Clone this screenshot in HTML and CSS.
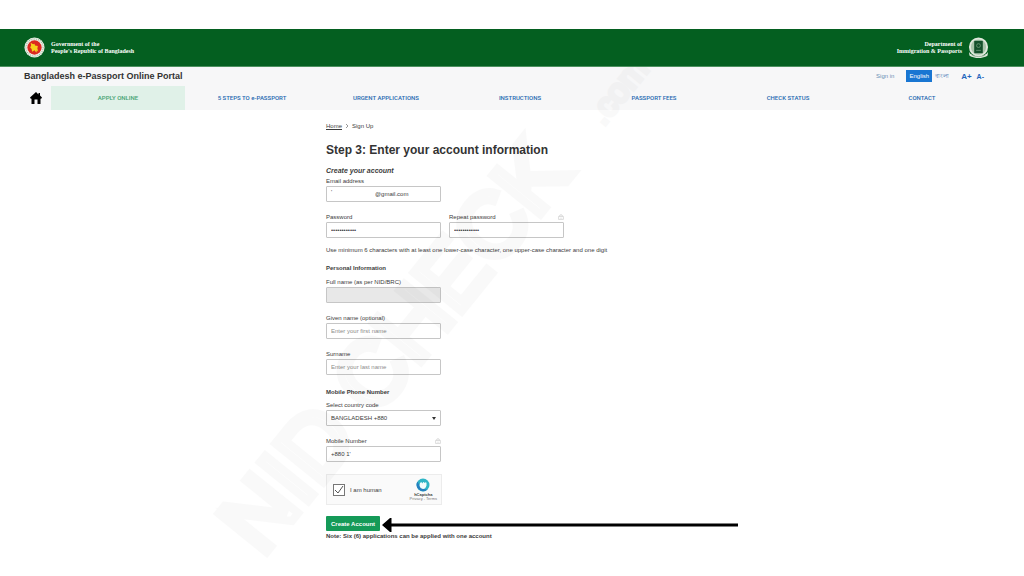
FILE: index.html
```
<!DOCTYPE html>
<html lang="en">
<head>
    <meta charset="UTF-8">
    <meta name="viewport" content="width=device-width, initial-scale=1.0">
    <title>Bangladesh e-Passport Online Portal</title>
    <link rel="stylesheet" href="styles.css">
</head>
<body>
    <header class="gov-bar">
        <div class="gov-brand">
            <svg class="seal" viewBox="0 0 44 44" aria-hidden="true">
                <circle cx="22" cy="22" r="21" fill="#f4f6ee"/>
                <circle cx="22" cy="22" r="18" fill="none" stroke="#9dbb9f" stroke-width="3" stroke-dasharray="2 2"/>
                <circle cx="22" cy="22" r="15" fill="#dc2a20"/>
                <path d="M14 12l5 3 3-1 1 4 6 1-1 5 2 7-3-3-1 5-4-5-5 3-1-6-3-3 2-4z" fill="#f6d21c"/>
            </svg>
            <span>Government of the<br>People's Republic of Bangladesh</span>
        </div>
        <div class="gov-brand right">
            <span>Department of<br>Immigration &amp; Passports</span>
            <svg class="seal" viewBox="0 0 44 44" aria-hidden="true">
                <circle cx="22" cy="21" r="18" fill="#a9c5ab" stroke="#dfe8dc" stroke-width="4"/>
                <rect x="13" y="8" width="18" height="26" fill="#14502b"/>
                <circle cx="22" cy="18" r="4" fill="none" stroke="#5f8f6b" stroke-width="2"/>
                <path d="M17 28h10" stroke="#5f8f6b" stroke-width="2"/>
                <path d="M2 31c5 12 35 12 40 0l-1 8c-9 7-29 7-38 0z" fill="#dfe8dc"/>
                <path d="M8 38c8 4 20 4 28 0" fill="none" stroke="#55805c" stroke-width="1"/>
            </svg>
        </div>
    </header>

    <div class="portal-head">
        <div class="portal-top">
            <strong class="portal-title">Bangladesh e-Passport Online Portal</strong>
            <div class="tools">
                <a class="sign-in" href="#">Sign in</a>
                <div class="langs">
                    <button type="button" class="lang active">English</button>
                    <button type="button" class="lang" lang="bn">বাংলা</button>
                </div>
                <div class="sizes">
                    <button type="button" class="size-up">A+</button>
                    <button type="button" class="size-down">A-</button>
                </div>
            </div>
        </div>
        <nav class="main-nav">
            <a class="home" href="#" aria-label="Home">
                <svg viewBox="0 0 24 24"><path d="M12 0L0 11l2 3 1-1v11h6v-9h6v9h6V13l1 1 2-3-4-4V2h-3v3z"/></svg>
            </a>
            <div class="nav-items">
                <a class="active" href="#">APPLY ONLINE</a>
                <a href="#">5 STEPS TO e-PASSPORT</a>
                <a href="#">URGENT APPLICATIONS</a>
                <a href="#">INSTRUCTIONS</a>
                <a href="#">PASSPORT FEES</a>
                <a href="#">CHECK STATUS</a>
                <a href="#">CONTACT</a>
            </div>
        </nav>
    </div>

    <main class="content">
        <div class="breadcrumb">
            <a href="#">Home</a>
            <svg viewBox="0 0 4 6" aria-hidden="true"><path d="M1 1l2 2-2 2"/></svg>
            <span>Sign Up</span>
        </div>
        <h1>Step 3: Enter your account information</h1>

        <form>
            <h2 class="create">Create your account</h2>
            <div class="grid">
                <div class="field">
                    <label for="email">Email address</label>
                    <div class="email-box">
                        <span>'</span>
                        <input id="email" type="text" value="@gmail.com">
                    </div>
                </div>
            </div>
            <div class="grid">
                <div class="field">
                    <label for="password">Password</label>
                    <input id="password" type="password" value="abcdefghijkl">
                </div>
                <div class="field">
                    <div class="label-row">
                        <label for="repeat">Repeat password</label>
                        <svg viewBox="0 0 10 10" aria-hidden="true"><path d="M3 4V2q2-2 4 0v2M1 4h8v5H1zM5 6v2"/></svg>
                    </div>
                    <input id="repeat" type="password" value="abcdefghijkl">
                </div>
            </div>
            <p class="hint">Use minimum 6 characters with at least one lower-case character, one upper-case character and one digit</p>

            <h2 class="section">Personal Information</h2>
            <div class="grid">
                <div class="field">
                    <label for="fullname">Full name (as per NID/BRC)</label>
                    <input id="fullname" type="text" disabled>
                </div>
            </div>
            <div class="grid">
                <div class="field">
                    <label for="given">Given name (optional)</label>
                    <input id="given" type="text" placeholder="Enter your first name">
                </div>
            </div>
            <div class="grid">
                <div class="field">
                    <label for="surname">Surname</label>
                    <input id="surname" type="text" placeholder="Enter your last name">
                </div>
            </div>

            <h2 class="section phone">Mobile Phone Number</h2>
            <div class="grid">
                <div class="field">
                    <label for="country">Select country code</label>
                    <select id="country">
                        <option>BANGLADESH +880</option>
                    </select>
                </div>
            </div>
            <div class="grid">
                <div class="field">
                    <div class="label-row">
                        <label for="mobile">Mobile Number</label>
                        <svg viewBox="0 0 10 10" aria-hidden="true"><path d="M3 4V2q2-2 4 0v2M1 4h8v5H1zM5 6v2"/></svg>
                    </div>
                    <input id="mobile" type="text" value="+880 1'">
                </div>
            </div>

            <div class="captcha">
                <input id="human" type="checkbox" checked>
                <label for="human">I am human</label>
                <div class="captcha-brand">
                    <svg viewBox="0 0 28 28" aria-hidden="true">
                        <circle cx="14" cy="14" r="13" fill="#2fb5c6"/>
                        <path d="M3 7A13 13 0 0 0 23 23Q10 24 3 7z" fill="#267fc0"/>
                        <path d="M8 10q3-3 5 1 2-5 4-1 3-3 4 0v5q-2 7-7 7-6-1-7-7z" fill="#f2fcfc"/>
                    </svg>
                    <b>hCaptcha</b>
                    <small>Privacy - Terms</small>
                </div>
            </div>

            <div class="submit-row">
                <button type="submit" class="submit">Create Account</button>
                <svg class="pointer" viewBox="0 0 356 14" aria-hidden="true">
                    <path d="M0 7L8 0h1.500v5.500H356v3H9.500V14H8z"/>
                </svg>
            </div>
            <p class="note">Note: Six (6) applications can be applied with one account</p>
        </form>
    </main>

    <svg class="watermark" viewBox="0 0 1024 576" aria-hidden="true">
        <g transform="translate(262 558) rotate(-51)">
            <text x="0" y="0">NID CHECK</text>
            <text class="domain" x="550" y="-6">.com</text>
        </g>
    </svg>
</body>
</html>
```
FILE: styles.css
```
* {
    box-sizing: border-box;
}
body {
    margin: 0;
    padding-top: 29px;
    background: #fff;
    color: #3c3c3c;
    font-family: "Liberation Sans", Arial, sans-serif;
    font-size: 6px;
    line-height: 10px;
}
a {
    color: inherit;
    text-decoration: none;
}
button, input, select {
    font-family: inherit;
    font-size: 6px;
    color: inherit;
}
h1, h2, p {
    margin: 0;
}

/* green bar */
.gov-bar {
    position: relative;
    z-index: 1;
    display: flex;
    justify-content: space-between;
    align-items: center;
    height: 38px;
    padding: 0 35px 0 24px;
    background: #045f20;
    border-bottom: 1px solid #4d9160;
}
.gov-brand {
    display: flex;
    align-items: center;
    gap: 6px;
    color: #fff;
    font: bold 6px/7px "Liberation Serif", "Times New Roman", serif;
}
.gov-brand.right {
    text-align: right;
}
.seal {
    width: 21px;
    height: 21px;
}

/* title and navigation */
.portal-head {
    padding: 1px 35px 0 24px;
    background: #f7f7f8;
}
.portal-top {
    display: flex;
    justify-content: space-between;
    align-items: center;
    height: 16px;
}
.portal-title {
    font-size: 9px;
    color: #333;
}
.tools, .langs, .sizes {
    display: flex;
    align-items: center;
}
.tools {
    gap: 12px;
    padding-right: 5px;
    color: #3f78b5;
}
.tools button {
    border: 0;
    background: none;
    padding: 0;
}
.sign-in {
    color: #6c8fb5;
}
.tools .lang {
    padding: 0 0 0 3px;
    height: 12px;
}
.tools .lang.active {
    padding: 0 3px;
    background: #1976d2;
    color: #fff;
}
.sizes {
    gap: 5px;
    color: #1f66bd;
}
.tools .size-up {
    font-size: 8px;
    font-weight: bold;
}
.tools .size-down {
    font-size: 7px;
    font-weight: bold;
}
.main-nav {
    display: flex;
    align-items: center;
    margin-top: 2px;
    height: 24px;
}
.home {
    display: flex;
    width: 27px;
    padding-left: 6px;
}
.home svg {
    width: 12px;
    height: 12px;
    fill: #000;
}
.nav-items {
    flex: 1;
    display: grid;
    grid-template-columns: repeat(7, 1fr);
}
.nav-items a {
    height: 24px;
    line-height: 23px;
    text-align: center;
    font-family: Roboto, sans-serif;
    font-weight: 500;
    color: #2368b0;
}
.nav-items a.active {
    background: #e0f1e8;
    color: #43a171;
}

/* form */
.content {
    max-width: 372px;
    margin: 0 auto;
    padding-top: 11px;
}
.breadcrumb {
    display: flex;
    align-items: center;
    gap: 3px;
}
.breadcrumb a {
    text-decoration: underline;
}
.breadcrumb svg {
    width: 4px;
    height: 6px;
    fill: none;
    stroke: #999;
}
h1 {
    margin-top: 10px;
    font-size: 12px;
    line-height: 18px;
    color: #333;
}
.create {
    margin-top: 7px;
    font-size: 7px;
    line-height: 10px;
    font-style: italic;
}
.grid {
    display: grid;
    grid-template-columns: 115px 115px;
    column-gap: 8px;
    margin-bottom: 10px;
}
.field label {
    display: block;
}
.label-row {
    display: flex;
    justify-content: space-between;
    align-items: center;
}
.label-row svg {
    width: 6px;
    height: 6px;
    fill: none;
    stroke: #c4c4c4;
}
.field input,
.field select,
.email-box {
    display: block;
    width: 100%;
    height: 16px;
    padding: 0 4px;
    border: 1px solid #c6c6c6;
    border-radius: 1px;
    background: #fff;
}
.field input[type="password"] {
    font-size: 6px;
}
.field input:disabled {
    background: #e8e8e8;
}
.field input::placeholder {
    color: #8c8c8c;
}
.email-box {
    display: flex;
}
.email-box span {
    width: 44px;
}
.email-box input {
    flex: 1;
    min-width: 0;
    height: 14px;
    padding: 0;
    border: 0;
    background: none;
}
.field select {
    appearance: none;
    background: url("data:image/svg+xml,%3Csvg xmlns='http://www.w3.org/2000/svg' viewBox='0 0 4 3'%3E%3Cpath d='M0 0h4L2 3z' fill='%23333'/%3E%3C/svg%3E") no-repeat right 4px center / 4px 3px #fff;
}
.hint {
    margin-top: -3px;
}
.section {
    margin: 8px 0 4px;
    font-size: 6px;
    line-height: 10px;
}
.section.phone {
    margin: 12px 0 3px;
}
.captcha {
    display: flex;
    align-items: center;
    width: 116px;
    height: 31px;
    margin-top: 12px;
    padding: 0 4px 0 6px;
    background: #fafafa;
    border: 1px solid #ececec;
}
.captcha input {
    appearance: none;
    width: 12px;
    height: 12px;
    margin: 0 5px 0 0;
    border: 1px solid #777;
    background: url("data:image/svg+xml,%3Csvg xmlns='http://www.w3.org/2000/svg' viewBox='0 0 10 10'%3E%3Cpath d='M1 5l3 3 5-7' fill='none' stroke='%23555'/%3E%3C/svg%3E") #fff;
}
.captcha-brand {
    display: flex;
    flex-direction: column;
    align-items: center;
    margin-left: auto;
    font-size: 4px;
    line-height: 5px;
}
.captcha-brand svg {
    width: 14px;
    height: 14px;
}
.captcha-brand small {
    font-size: 4px;
    line-height: 4px;
    color: #777;
}
.submit-row {
    position: relative;
    display: flex;
    margin-top: 11px;
}
.submit {
    height: 15px;
    padding: 0 5px;
    border: 0;
    border-radius: 1px;
    background: #159a58;
    color: #fff;
    font-weight: bold;
}
/* callout arrow drawn over the page */
.pointer {
    position: absolute;
    left: 56px;
    top: 2px;
    width: 356px;
    height: 14px;
}
.note {
    font-weight: bold;
}

/* diagonal watermark */
.watermark {
    position: absolute;
    inset: 0;
    width: 100%;
    height: 576px;
    pointer-events: none;
    font: 90px "Liberation Sans", Arial, sans-serif;
    fill: none;
    stroke: #000;
    stroke-width: 8px;
    opacity: 0.02;
}
.watermark .domain {
    font-size: 34px;
    stroke-width: 4px;
}
```
